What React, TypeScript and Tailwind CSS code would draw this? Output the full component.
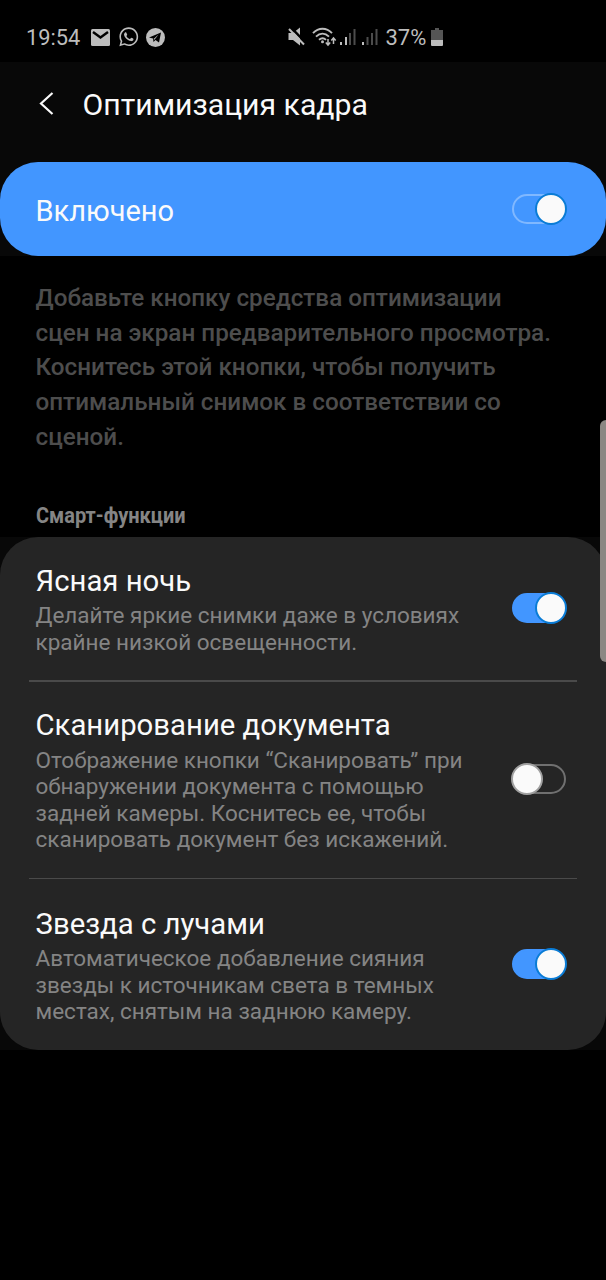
import { useState } from 'react';
import { FaWhatsapp } from 'react-icons/fa';

interface ToggleProps {
  checked: boolean;
  outlined?: boolean;
  onChange: () => void;
}

function Toggle({ checked, outlined, onChange }: ToggleProps) {
  let track = 'border-[#707070] bg-transparent';
  if (checked) track = 'border-[#4296ff] bg-[#4296ff]';
  if (checked && outlined) track = 'border-[#80b8ff] bg-transparent';

  return (
    <button
      role="switch"
      aria-checked={checked}
      onClick={onChange}
      className="relative flex h-8 w-14 shrink-0 items-center"
    >
      <span className={`mx-auto h-[30px] w-[54px] rounded-full border-2 ${track}`}></span>
      <span
        className={`absolute top-0 h-8 w-8 rounded-full border-2 bg-[#fafafa] ${
          checked ? 'right-0 border-[#0a7cd6]' : 'left-0 border-[#a0a0a0]'
        }`}
      ></span>
    </button>
  );
}

function StatusBar() {
  return (
    <div className="flex h-[62px] items-center bg-black pt-[12px] pl-[26px] text-[#bdbdbd]">
      <span className="w-[65px] pt-[2px] text-[21.8px] leading-none">19:54</span>
      <svg className="shrink-0" width="19" height="17" viewBox="0 0 19 17">
        <rect width="19" height="17" rx="1.5" fill="currentColor" />
        <path d="M2 3l7.500 5.500L17 3" fill="none" stroke="#000" strokeWidth="2.400" />
      </svg>
      <FaWhatsapp className="ml-[8px] h-[21.500px] w-[21.500px] shrink-0" />
      <svg className="ml-[6.500px] shrink-0" width="19" height="19" viewBox="0 0 19 19">
        <circle cx="9.500" cy="9.500" r="9.500" fill="currentColor" />
        <path d="M3 9.500L15 4.500l-2 10-3.500-2.500-2 2-.5-3.500z" fill="#000" />
        <path d="M7.500 11l5-4.500-4 5.200" fill="currentColor" />
      </svg>

      {/* Звук выключен */}
      <svg className="ml-[123px] shrink-0" width="18" height="20" viewBox="0 0 18 20" fill="currentColor">
        <path d="M.5 6H5l7-5.500v18L5 13H.5z" />
        <path d="M1.500-1L17.500 15.500" stroke="#000" strokeWidth="2.500" />
        <path d="M1 2L16 17.500" stroke="currentColor" strokeWidth="2" />
      </svg>

      {/* Wi-Fi со стрелками передачи данных */}
      <svg className="ml-[6px] shrink-0" width="25" height="20" viewBox="0 0 25 20" fill="none" stroke="currentColor">
        <path d="M1 6.200C6.500.2 14.500.2 20 6.200M4 9.600c4-4 9-4 13 0M7 12.800c2.200-2 5-2 7 0" strokeWidth="1.900" />
        <circle cx="10.500" cy="14.700" r="1.500" fill="currentColor" stroke="none" />
        <path d="M16 12v6M13.800 15.500l2.200 2.500 2.200-2.500M21.500 17v-6M19.300 13.500l2.200-2.500 2.200 2.500" strokeWidth="1.500" />
      </svg>

      {/* Сигнал двух SIM-карт */}
      <svg className="ml-[3px] shrink-0" width="38" height="18" viewBox="0 0 38 18" fill="currentColor">
        <path d="M0 14h2v3H0zM5 9h2v8H5z" />
        <path d="M9 5h2v12H9zM13.500 1h2v16h-2z" opacity=".4" />
        <path d="M22 14h2v3h-2z" />
        <path d="M26.500 9h2v8h-2zM31 5h2v12h-2zM35.500 1h2v16h-2z" opacity=".4" />
      </svg>

      <span className="ml-[7.500px] w-[45px] pt-[2px] text-[22px] leading-none">37%</span>
      <svg className="shrink-0" width="12" height="18" viewBox="0 0 12 18" fill="currentColor">
        <path d="M4 0h4v2h4v10H0V2h4z" opacity=".45" />
        <path d="M0 12h12v5a1 1 0 0 1-1 1H1a1 1 0 0 1-1-1z" />
      </svg>
    </div>
  );
}

const features = [
  {
    id: 'night',
    title: 'Ясная ночь',
    lines: ['Делайте яркие снимки даже в условиях', 'крайне низкой освещенности.'],
    height: 'h-[143px]'
  },
  {
    id: 'scan',
    title: 'Сканирование документа',
    lines: [
      'Отображение кнопки “Сканировать” при',
      'обнаружении документа с помощью',
      'задней камеры. Коснитесь ее, чтобы',
      'сканировать документ без искажений.'
    ],
    height: 'h-[196px]'
  },
  {
    id: 'star',
    title: 'Звезда с лучами',
    lines: [
      'Автоматическое добавление сияния',
      'звезды к источникам света в темных',
      'местах, снятым на заднюю камеру.'
    ],
    height: 'h-[171px]'
  }
];

const description = [
  'Добавьте кнопку средства оптимизации',
  'сцен на экран предварительного просмотра.',
  'Коснитесь этой кнопки, чтобы получить',
  'оптимальный снимок в соответствии со',
  'сценой.'
];

export default function App() {
  const [enabled, setEnabled] = useState(true);
  const [active, setActive] = useState<Record<string, boolean>>({ night: true, scan: false, star: true });

  return (
    <div className="relative min-h-[1280px] w-full overflow-hidden bg-black font-['Roboto',sans-serif] text-[#fafafa]">
      <StatusBar />

      <div className="bg-[#080808]">
        <header className="flex h-[100px] items-center pb-[16px] pl-[39px]">
          <svg width="15" height="24" viewBox="0 0 15 24" fill="none" stroke="currentColor" strokeWidth="2.200">
            <path d="M13.500 1L2 11.500 13.500 22" />
          </svg>
          <h1 className="ml-[28.500px] pt-[2px] text-[30.200px] leading-none whitespace-nowrap">Оптимизация кадра</h1>
        </header>

        <div className="flex h-[94px] items-center justify-between rounded-[38px] bg-[#4296ff] pr-[39px] pl-[35.500px]">
          <span className="pt-[4px] text-[29px] leading-none">Включено</span>
          <Toggle checked={enabled} outlined onChange={() => setEnabled(!enabled)} />
        </div>
      </div>

      <div className="h-[281px] px-[35.500px] pt-[25px] whitespace-nowrap">
        <p className="text-[24.250px] leading-[34.700px] font-medium text-[#4d4d4d]">
          {description.map((line) => (
            <span key={line} className="block">{line}</span>
          ))}
        </p>
        <h3 className="mt-[43px] origin-left scale-x-90 text-[22.200px] leading-[35px] font-bold text-[#858585]">
          Смарт-функции
        </h3>
      </div>

      <div className="bg-[#080808]">
        <div className="rounded-[38px] bg-[#252525]">
          {features.map((item, i) => (
            <div key={item.id}>
              {i > 0 && <div className="mx-[29px] h-[1.500px] bg-[#4a4a4a]"></div>}
              <div className={`flex items-center justify-between pr-[39px] pb-[2px] pl-[35.500px] ${item.height}`}>
                <div className="pt-[1px] whitespace-nowrap">
                  <h2 className="mb-[1.500px] text-[29.300px] leading-[40px]">{item.title}</h2>
                  <p className="text-[22.500px] leading-[26.500px] text-[#848484]">
                    {item.lines.map((line) => (
                      <span key={line} className="block">{line}</span>
                    ))}
                  </p>
                </div>
                <Toggle
                  checked={active[item.id]}
                  onChange={() => setActive({ ...active, [item.id]: !active[item.id] })}
                />
              </div>
            </div>
          ))}
        </div>
      </div>

      {/* Ручка боковой панели */}
      <div className="absolute top-[420px] right-0 h-[242px] w-[6px] rounded-l-[6px] bg-[#8b8783]"></div>
    </div>
  );
}
